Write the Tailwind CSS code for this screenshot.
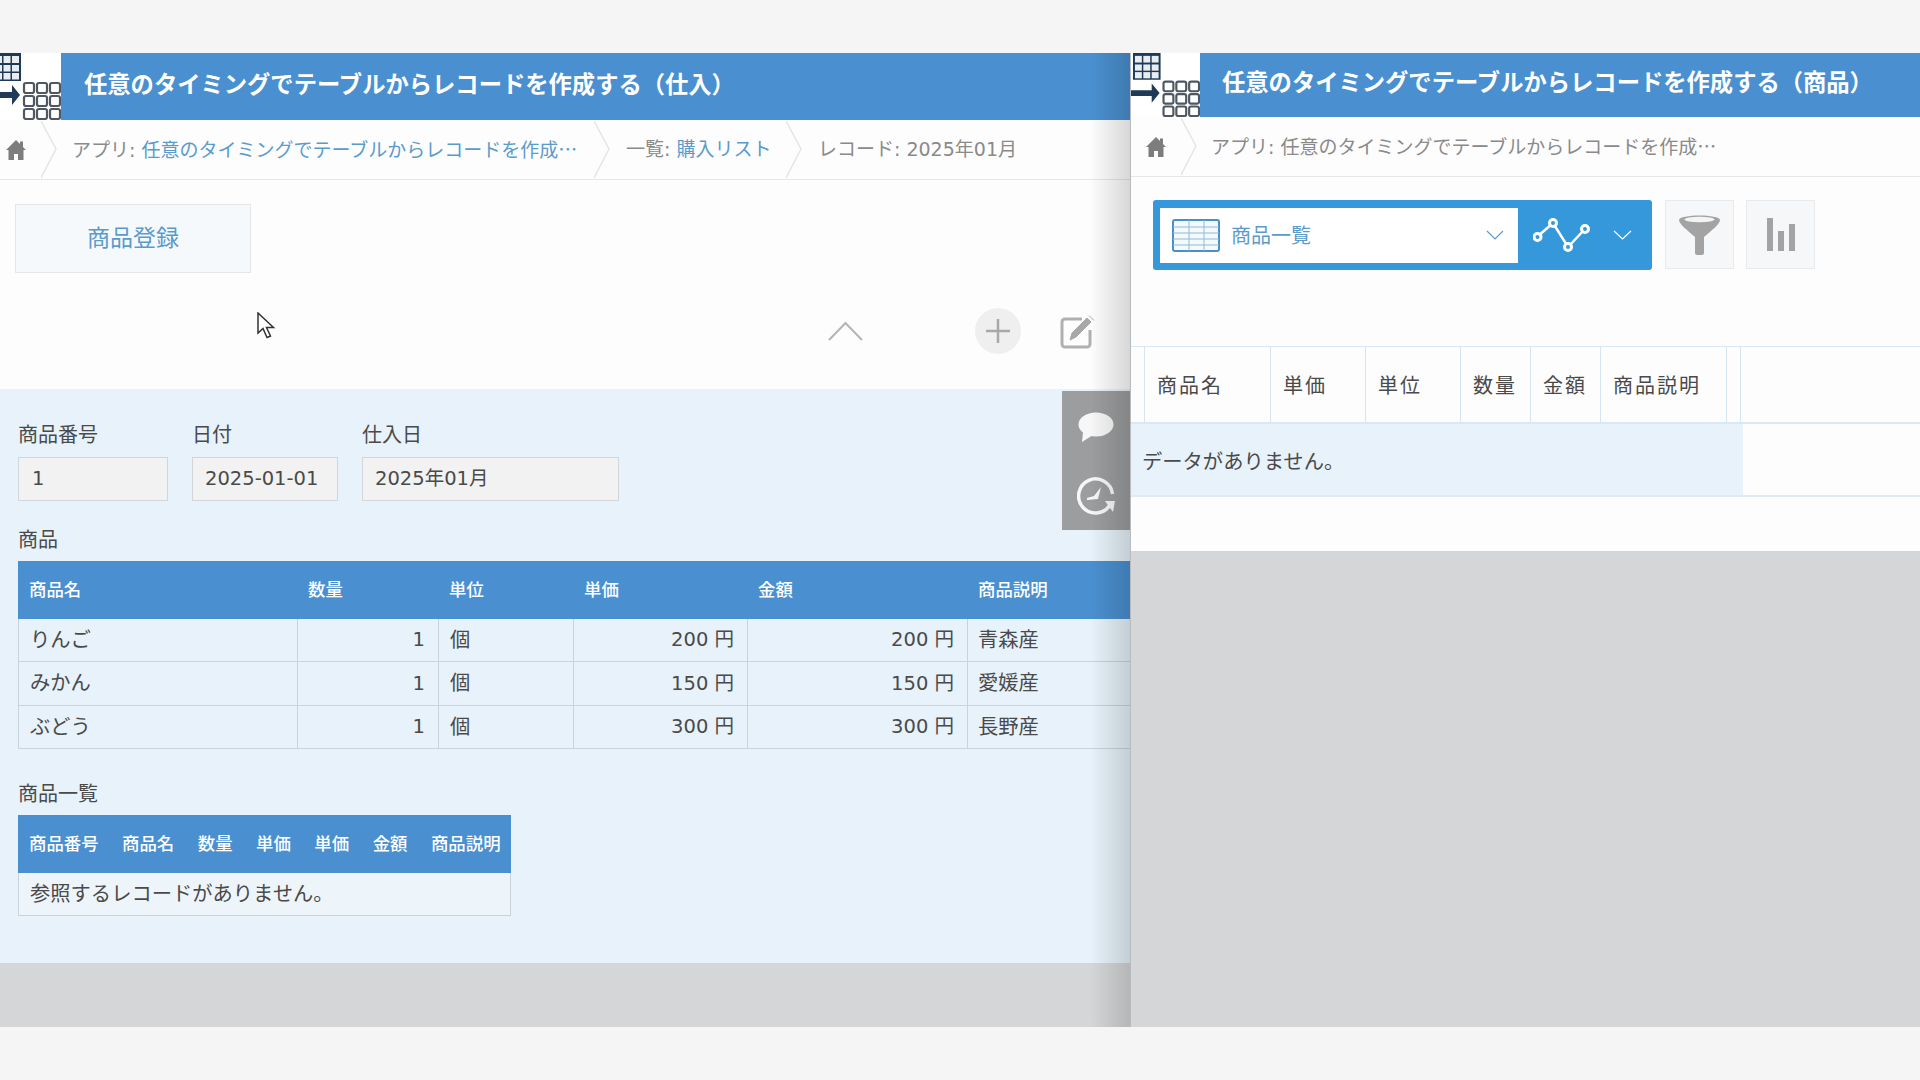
<!DOCTYPE html>
<html lang="ja">

<head>
    <meta charset="UTF-8" />
    <title>kintone</title>
    <script src="https://cdn.jsdelivr.net/npm/@tailwindcss/browser@4"></script>
</head>

<body class="bg-[#f5f5f5] font-['DejaVu_Sans','Noto_Sans_CJK_JP',sans-serif] text-[#4a4a4a]">
    <!-- shared app logo -->
    <svg class="hidden">
        <symbol id="logo" viewBox="0 0 70 67" preserveAspectRatio="none">
            <rect x="2" y="-2" width="28" height="30" fill="#1f3a56" />
            <g fill="#e8edf2">
                <rect x="4" y="3" width="7" height="7" /><rect x="12.5" y="3" width="7" height="7" /><rect x="21" y="3" width="7" height="7" />
                <rect x="4" y="12" width="7" height="6.500" /><rect x="12.500" y="12" width="7" height="6.500" /><rect x="21" y="12" width="7" height="6.500" />
                <rect x="4" y="20" width="7" height="6.500" /><rect x="12.500" y="20" width="7" height="6.500" /><rect x="21" y="20" width="7" height="6.500" />
            </g>
            <path d="M0 39h21v-7l8 10-8 10v-7H0z" fill="#1f3a56" />
            <g fill="none" stroke="#4f5862" stroke-width="2.200">
                <rect x="33" y="30" width="10" height="10" rx="2" /><rect x="46" y="30" width="10" height="10" rx="2" /><rect x="59" y="30" width="10" height="10" rx="2" />
                <rect x="33" y="43" width="10" height="10" rx="2" /><rect x="46" y="43" width="10" height="10" rx="2" /><rect x="59" y="43" width="10" height="10" rx="2" />
                <rect x="33" y="56" width="10" height="10" rx="2" /><rect x="46" y="56" width="10" height="10" rx="2" /><rect x="59" y="56" width="10" height="10" rx="2" />
            </g>
        </symbol>
        <symbol id="home" viewBox="0 0 20 20">
            <path d="M10 0 0 10h2.500v10h5.500v-6h4v6h5.500V10H20l-3-3V1.500h-3v2.500z" fill="#7d7d7d" />
        </symbol>
        <symbol id="crumb" viewBox="0 0 16 58">
            <path d="M0 0 15 28 0 57" fill="none" stroke="#e3e5e7" stroke-width="1.500" />
        </symbol>
    </svg>

    <div class="h-[53px]"></div>

    <main class="flex h-[974px] overflow-hidden">
        <!-- left record page -->
        <section class="relative w-[1130px] shrink-0 flex flex-col bg-[#fdfdfd]">
            <header class="flex h-[67px] shrink-0">
                <svg class="w-[61px] h-[67px] shrink-0 bg-white" viewBox="9 0 61 67"><use href="#logo" width="70" height="67" /></svg>
                <div class="flex-1 bg-[#4a90d0] text-white font-bold text-[23.300px] pl-[23px] leading-[61px] whitespace-nowrap font-['Noto_Sans_CJK_JP',sans-serif]">任意のタイミングでテーブルからレコードを作成する（仕入）</div>
            </header>

            <nav class="flex items-center h-[60px] shrink-0 border-b border-[#e4e6e8] text-[19px] text-[#8a8a8a] whitespace-nowrap">
                <svg class="w-[20px] h-[20px] ml-[6px] shrink-0"><use href="#home" /></svg>
                <svg class="w-[16px] h-[58px] ml-[15px] shrink-0"><use href="#crumb" /></svg>
                <span class="ml-[15px] w-[522px] shrink-0">アプリ: <a class="text-[#5a9bcb]">任意のタイミングでテーブルからレコードを作成<span class="font-['Noto_Sans_CJK_JP']">…</span></a></span>
                <svg class="w-[16px] h-[58px] shrink-0"><use href="#crumb" /></svg>
                <span class="ml-[16px] w-[160px] shrink-0">一覧: <a class="text-[#5a9bcb]">購入リスト</a></span>
                <svg class="w-[16px] h-[58px] shrink-0"><use href="#crumb" /></svg>
                <span class="ml-[16px]">レコード: 2025年01月</span>
            </nav>

            <div class="h-[209px] shrink-0 relative">
                <button class="ml-[15px] mt-[24px] w-[236px] h-[69px] border border-[#e4e6e8] bg-[#f6f9fb] text-[#5a9bcb] text-[23px] pb-[4px] font-['Noto_Sans_CJK_JP',sans-serif] block">商品登録</button>
                <div class="flex items-center justify-end mt-[35px]">
                    <svg class="w-[35px] h-[20px] mr-[112px]" viewBox="0 0 35 20"><path d="M1 19 17.500 2 34 19" fill="none" stroke="#b5b5b5" stroke-width="2" /></svg>
                    <div class="w-[46px] h-[46px] rounded-full bg-[#efefef] flex items-center justify-center mr-[39px]">
                        <svg class="w-[24px] h-[24px]" viewBox="0 0 24 24"><path d="M12 0v24M0 12h24" stroke="#a8a8a8" stroke-width="2.500" /></svg>
                    </div>
                    <svg class="w-[36px] h-[36px] mr-[34px]" viewBox="0 0 36 36">
                        <path d="M22 6H5a3 3 0 0 0-3 3v22a3 3 0 0 0 3 3h22a3 3 0 0 0 3-3V17" fill="none" stroke="#b0b0b0" stroke-width="3" />
                        <path d="M10 27l2-7L27 5l4 4L16 24zM29 2.500l5 5" fill="#a8a8a8" stroke="#a8a8a8" />
                    </svg>
                </div>
            </div>

            <div class="h-[574px] shrink-0 bg-[#e7f2fa] pl-[18px] pt-[33px]">
                <div class="flex gap-[24px] text-[19.500px]">
                    <div>
                        <div class="leading-[24px] mb-[11px] text-[20px] font-['Noto_Sans_CJK_JP',sans-serif]">商品番号</div>
                        <div class="w-[150px] h-[44px] bg-[#f2f2f2] border border-[#d3d6d8] pl-[13px] leading-[42px]">1</div>
                    </div>
                    <div>
                        <div class="leading-[24px] mb-[11px] text-[20px] font-['Noto_Sans_CJK_JP',sans-serif]">日付</div>
                        <div class="w-[146px] h-[44px] bg-[#f2f2f2] border border-[#d3d6d8] pl-[12px] leading-[42px]">2025-01-01</div>
                    </div>
                    <div>
                        <div class="leading-[24px] mb-[11px] text-[20px] font-['Noto_Sans_CJK_JP',sans-serif]">仕入日</div>
                        <div class="w-[257px] h-[44px] bg-[#f2f2f2] border border-[#d3d6d8] pl-[12px] leading-[42px]">2025年01月</div>
                    </div>
                </div>

                <div class="mt-[26px] h-[24px] leading-[24px] text-[20px] font-['Noto_Sans_CJK_JP',sans-serif]">商品</div>
                <div class="mt-[10px] grid grid-cols-[279px_141px_135px_174px_220px_163px] text-[19.500px]">
                    <div class="col-span-6 grid grid-cols-[279px_141px_135px_174px_220px_163px] h-[58px] items-center pb-[2px] bg-[#4a90d0] text-white text-[17.400px] font-medium font-['Noto_Sans_CJK_JP',sans-serif] [&>div]:pl-[11px]">
                        <div>商品名</div><div>数量</div><div>単位</div><div>単価</div><div>金額</div><div>商品説明</div>
                    </div>
                    <div class="h-[43px] leading-[42px] border-l border-b border-[#c9d3da] pl-[11px] text-[20.300px]">りんご</div>
                    <div class="h-[43px] leading-[42px] border-l border-b border-[#c9d3da] text-right pr-[13px]">1</div>
                    <div class="h-[43px] leading-[42px] border-l border-b border-[#c9d3da] pl-[11px] text-[20.300px]">個</div>
                    <div class="h-[43px] leading-[42px] border-l border-b border-[#c9d3da] text-right pr-[13px]">200 円</div>
                    <div class="h-[43px] leading-[42px] border-l border-b border-[#c9d3da] text-right pr-[13px]">200 円</div>
                    <div class="h-[43px] leading-[42px] border-l border-b border-[#c9d3da] pl-[10px] text-[20.300px]">青森産</div>
                    <div class="h-[44px] leading-[43px] border-l border-b border-[#c9d3da] pl-[11px] text-[20.300px]">みかん</div>
                    <div class="h-[44px] leading-[43px] border-l border-b border-[#c9d3da] text-right pr-[13px]">1</div>
                    <div class="h-[44px] leading-[43px] border-l border-b border-[#c9d3da] pl-[11px] text-[20.300px]">個</div>
                    <div class="h-[44px] leading-[43px] border-l border-b border-[#c9d3da] text-right pr-[13px]">150 円</div>
                    <div class="h-[44px] leading-[43px] border-l border-b border-[#c9d3da] text-right pr-[13px]">150 円</div>
                    <div class="h-[44px] leading-[43px] border-l border-b border-[#c9d3da] pl-[10px] text-[20.300px]">愛媛産</div>
                    <div class="h-[43px] leading-[42px] border-l border-b border-[#c9d3da] pl-[11px] text-[20.300px]">ぶどう</div>
                    <div class="h-[43px] leading-[42px] border-l border-b border-[#c9d3da] text-right pr-[13px]">1</div>
                    <div class="h-[43px] leading-[42px] border-l border-b border-[#c9d3da] pl-[11px] text-[20.300px]">個</div>
                    <div class="h-[43px] leading-[42px] border-l border-b border-[#c9d3da] text-right pr-[13px]">300 円</div>
                    <div class="h-[43px] leading-[42px] border-l border-b border-[#c9d3da] text-right pr-[13px]">300 円</div>
                    <div class="h-[43px] leading-[42px] border-l border-b border-[#c9d3da] pl-[10px] text-[20.300px]">長野産</div>
                </div>

                <div class="mt-[32px] h-[24px] leading-[24px] text-[20px] font-['Noto_Sans_CJK_JP',sans-serif]">商品一覧</div>
                <div class="mt-[10px] w-[493px]">
                    <div class="flex gap-[23.500px] h-[58px] items-center pb-[2px] pl-[11px] bg-[#4a90d0] text-white text-[17.400px] font-medium font-['Noto_Sans_CJK_JP',sans-serif] whitespace-nowrap">
                        <div>商品番号</div><div>商品名</div><div>数量</div><div>単価</div><div>単価</div><div>金額</div><div>商品説明</div>
                    </div>
                    <div class="h-[43px] leading-[39px] border border-t-0 border-[#c9d3da] pl-[11px] text-[20.300px] bg-[#eef5fa] font-['Noto_Sans_CJK_JP',sans-serif]">参照するレコードがありません。</div>
                </div>
            </div>

            <div class="flex-1 bg-[#d5d6d7]"></div>

            <!-- side tabs and overlays -->
            <div class="absolute left-[1062px] top-[338px] w-[68px] h-[139px] bg-[#9c9d9e] flex flex-col items-center pt-[21px] gap-[35px]">
                <svg class="w-[36px] h-[30px]" viewBox="0 0 36 30"><ellipse cx="18" cy="12.500" rx="17.500" ry="12" fill="#f7f7f7" /><path d="M5 20 4 30 15 23z" fill="#f7f7f7" /></svg>
                <svg class="w-[38px] h-[38px]" viewBox="0 0 38 38">
                    <path d="M33 28A17 17 0 1 1 35.500 17" fill="none" stroke="#f7f7f7" stroke-width="3.500" />
                    <path d="M10 21l7-2 7-9-3 12-11 1z" fill="#f7f7f7" />
                    <path d="M28 24h10l-2 11z" fill="#f7f7f7" />
                </svg>
            </div>
            <div class="absolute top-0 bottom-0 right-0 w-[40px] bg-linear-to-r from-transparent to-black/15 pointer-events-none"></div>
            <svg class="absolute left-[257px] top-[259px] w-[19px] h-[27px]" viewBox="0 0 19 27">
                <path d="M1 1v20l5-4.500 4 9 3.500-1.500-4-8.500h7z" fill="#fff" stroke="#333" stroke-width="1.500" />
            </svg>
        </section>

        <!-- right list page -->
        <section class="flex-1 flex flex-col border-l border-[#b8bcbe] bg-[#fdfdfd]">
            <header class="flex h-[64px] shrink-0">
                <svg class="w-[69px] h-[64px] shrink-0 bg-white"><use href="#logo" width="69" height="64" /></svg>
                <div class="flex-1 bg-[#4a90d0] text-white font-bold text-[23.300px] pl-[22px] leading-[57px] whitespace-nowrap font-['Noto_Sans_CJK_JP',sans-serif]">任意のタイミングでテーブルからレコードを作成する（商品）</div>
            </header>

            <nav class="flex items-center h-[60px] shrink-0 border-b border-[#e4e6e8] text-[19px] text-[#8a8a8a] whitespace-nowrap">
                <svg class="w-[22px] h-[20px] ml-[14px] shrink-0"><use href="#home" /></svg>
                <svg class="w-[16px] h-[58px] ml-[14px] shrink-0"><use href="#crumb" /></svg>
                <span class="ml-[14px]">アプリ: 任意のタイミングでテーブルからレコードを作成<span class="font-['Noto_Sans_CJK_JP']">…</span></span>
            </nav>

            <div class="flex h-[169px] shrink-0 items-start pt-[23px] pl-[22px]">
                <div class="flex w-[499px] h-[70px] bg-[#3498db] rounded-[3px] items-center pl-[7px]">
                    <div class="w-[358px] h-[55px] bg-white flex items-center pl-[12px]">
                        <svg class="w-[48px] h-[33px] shrink-0" viewBox="0 0 48 33">
                            <rect x="1" y="1" width="46" height="31" rx="2" fill="#f4f9fc" stroke="#4a90c8" stroke-width="2" />
                            <path d="M1 8h46M1 14h46M1 20h46M1 26h46M17 1v31M32 1v31" stroke="#8dbbdb" stroke-width="1" />
                        </svg>
                        <span class="ml-[11px] text-[20px] text-[#5a9bcb] font-['Noto_Sans_CJK_JP',sans-serif]">商品一覧</span>
                        <svg class="w-[18px] h-[10px] ml-auto mr-[14px]" viewBox="0 0 18 10"><path d="M1 1l8 8 8-8" fill="none" stroke="#5a9bcb" stroke-width="1.200" /></svg>
                    </div>
                    <svg class="w-[57px] h-[34px] ml-[15px]" viewBox="0 0 57 34">
                        <path d="M4 19 20 5 35 29 52 11" fill="none" stroke="#fff" stroke-width="2.500" />
                        <g fill="#3498db" stroke="#fff" stroke-width="3"><circle cx="4.500" cy="19" r="3.500" /><circle cx="20" cy="5" r="3.500" /><circle cx="35" cy="29" r="3.500" /><circle cx="52" cy="11" r="3.500" /></g>
                    </svg>
                    <svg class="w-[19px] h-[10px] ml-[23px]" viewBox="0 0 19 10"><path d="M1 1l8.500 8L18 1" fill="none" stroke="#fff" stroke-width="1.200" /></svg>
                </div>
                <div class="w-[69px] h-[69px] ml-[13px] border border-[#e8eaec] bg-[#f6f7f8] flex items-center justify-center">
                    <svg class="w-[41px] h-[40px]" viewBox="0 0 41 40">
                        <path d="M0 5C0-1 41-1 41 5c0 4-8 10-16 17v16a2 2 0 0 1-2 2h-5a2 2 0 0 1-2-2V22C8 15 0 9 0 5z" fill="#a3a3a3" />
                        <ellipse cx="20.500" cy="4.500" rx="15" ry="2.800" fill="#f4f4f4" />
                    </svg>
                </div>
                <div class="w-[69px] h-[69px] ml-[12px] border border-[#e8eaec] bg-[#f6f7f8] flex items-end justify-center gap-[5px] pb-[17px]">
                    <div class="w-[6px] h-[33px] bg-[#a3a3a3]"></div>
                    <div class="w-[6px] h-[20px] bg-[#a3a3a3]"></div>
                    <div class="w-[6px] h-[27px] bg-[#a3a3a3]"></div>
                </div>
            </div>

            <div class="h-[78px] shrink-0 flex border-t border-b-2 border-[#d9e8f3] text-[20px] leading-[76px] tracking-[2px] font-['Noto_Sans_CJK_JP',sans-serif]">
                <div class="w-[14px] border-r border-[#d5e6f2]"></div>
                <div class="w-[126px] pl-[12px] border-r border-[#d5e6f2]">商品名</div>
                <div class="w-[95px] pl-[12px] border-r border-[#d5e6f2]">単価</div>
                <div class="w-[95px] pl-[12px] border-r border-[#d5e6f2]">単位</div>
                <div class="w-[70px] pl-[12px] border-r border-[#d5e6f2]">数量</div>
                <div class="w-[70px] pl-[12px] border-r border-[#d5e6f2]">金額</div>
                <div class="w-[126px] pl-[12px] border-r border-[#d5e6f2]">商品説明</div>
                <div class="w-[14px] border-r border-[#d5e6f2]"></div>
            </div>
            <div class="h-[73px] shrink-0 border-b-2 border-[#dfeaf3]">
                <div class="w-[612px] h-full bg-[#e7f2fa] pl-[11px] leading-[72px] text-[20.300px] font-['Noto_Sans_CJK_JP',sans-serif]">データがありません。</div>
            </div>
            <div class="h-[54px] shrink-0"></div>
            <div class="flex-1 bg-[#d5d6d7]"></div>
        </section>
    </main>
</body>

</html>
